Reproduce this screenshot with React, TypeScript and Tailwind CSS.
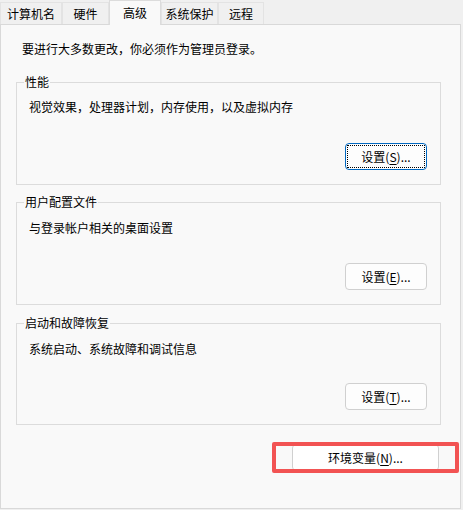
import React from "react";

const tabs = [
  { label: "计算机名", w: "w-[62px]" },
  { label: "硬件", w: "w-[47px]" },
  { label: "高级", w: "w-[52px]", active: true },
  { label: "系统保护", w: "w-[57px]" },
  { label: "远程", w: "w-[46px]" },
];

const Btn: React.FC<{ text: string; k: string; focused?: boolean }> = ({ text, k, focused }) => (
  <button
    className={
      "w-[82px] h-[27px] rounded-[4px] bg-[#fdfdfd] text-[12px] text-black flex items-center justify-center " +
      (focused ? "border border-[#0067c0] p-[1px]" : "border border-[#d0d0d0]")
    }
  >
    <span
      className={
        "w-full h-full flex items-center justify-center " +
        (focused ? "border border-dotted border-black" : "")
      }
    >
      {text}(<span className="underline underline-offset-2">{k}</span>)...
    </span>
  </button>
);

const Group: React.FC<{
  title: string;
  desc: string;
  btn: React.ReactNode;
  pt: string;
  mt: string;
  pb: string;
  top: string;
}> = ({ title, desc, btn, pt, mt, pb, top }) => (
  <fieldset className={`border border-[#dcdcdc] w-[425px] ${top} ${pb}`}>
    <legend className="ml-[7px] px-[1px] text-[12px] leading-[16px]">{title}</legend>
    <div className={`text-[12px] leading-[16px] pl-[12px] ${pt}`}>{desc}</div>
    <div className={`flex justify-end pr-[13px] ${mt}`}>{btn}</div>
  </fieldset>
);

export default function App() {
  return (
    <div
      className="w-[463px] h-[510px] bg-[#f0f0f0] text-black overflow-hidden"
      style={{ fontFamily: '"Noto Sans CJK SC", "Liberation Sans", sans-serif' }}
    >
      <div className="flex items-end h-[24px] relative z-10">
        {tabs.map((t) =>
          t.active ? (
            <div
              key={t.label}
              className={`${t.w} h-[25px] -mb-px bg-[#f9f9f9] border border-b-0 border-[#dcdcdc] text-[12px] flex items-start justify-center pt-[3px]`}
            >
              {t.label}
            </div>
          ) : (
            <div
              key={t.label}
              className={`${t.w} h-[22px] bg-[#f0f0f0] border border-b-0 border-[#e3e3e3] text-[12px] flex items-center justify-center`}
            >
              {t.label}
            </div>
          )
        )}
      </div>
      <div className="w-[461px] h-[485px] bg-[#f9f9f9] border border-[#d9d9d9] pl-[15px] flex flex-col">
        <div className="text-[12px] leading-[16px] pt-[16px] pl-[6px]">要进行大多数更改，你必须作为管理员登录。</div>
        <Group
          title="性能"
          desc="视觉效果，处理器计划，内存使用，以及虚拟内存"
          btn={<Btn text="设置" k="S" focused />}
          top="mt-[17px]"
          pt="pt-[9px]"
          mt="mt-[28px]"
          pb="pb-[14px]"
        />
        <Group
          title="用户配置文件"
          desc="与登录帐户相关的桌面设置"
          btn={<Btn text="设置" k="E" />}
          top="mt-[9px]"
          pt="pt-[10px]"
          mt="mt-[27px]"
          pb="pb-[14px]"
        />
        <Group
          title="启动和故障恢复"
          desc="系统启动、系统故障和调试信息"
          btn={<Btn text="设置" k="T" />}
          top="mt-[10px]"
          pt="pt-[10px]"
          mt="mt-[26px]"
          pb="pb-[14px]"
        />
        <div className="flex justify-end w-[423px] mt-[19px]">
          <div className="relative">
            <button className="w-[147px] h-[27px] bg-white border border-[#d0d0d0] rounded-[4px] text-[12px] flex items-center justify-center">
              环境变量(<span className="underline underline-offset-2">N</span>)...
            </button>
            <div className="absolute left-[-20px] right-[-20px] top-[-2px] bottom-[-2px] border-[4px] border-[#f25353] rounded-[2px]" />
          </div>
        </div>
      </div>
    </div>
  );
}
